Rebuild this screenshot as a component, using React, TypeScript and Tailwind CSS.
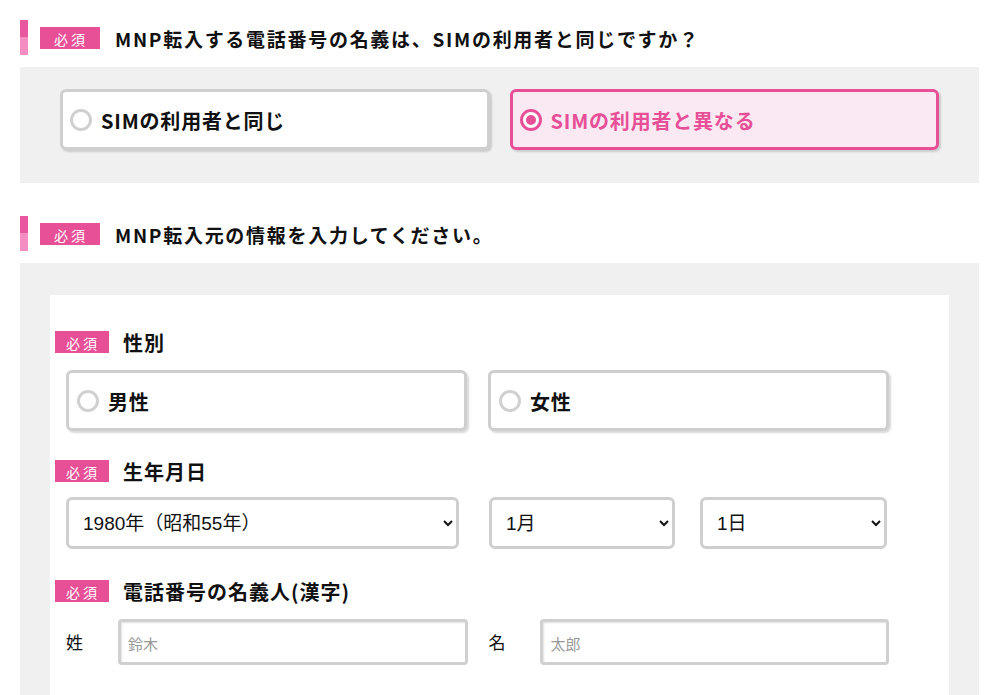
import { useState } from 'react'

const jp = "font-['Noto_Sans_CJK_JP',sans-serif]"

function Required({ wide = false }: { wide?: boolean }) {
  return (
    <span
      className={`block ${wide ? 'w-[60px]' : 'w-[54px]'} h-[22px] shrink-0 bg-[#e74f97] text-white text-[14px] leading-[22px] pt-[1px] text-center tracking-[3px] pl-[2px] ${jp}`}
    >
      必須
    </span>
  )
}

function SectionTitle({ children }: { children: React.ReactNode }) {
  return (
    <div className="flex items-center h-[35px]">
      <div className="flex flex-col w-[8px] h-[35px]">
        <div className="h-[17px] bg-[#e8589e]" />
        <div className="flex-1 bg-[#f48dc1]" />
      </div>
      <div className="ml-[12px]">
        <Required wide />
      </div>
      <h2 className={`ml-[15px] pt-[4px] text-[19px] font-bold text-[#111] tracking-[0.09em] ${jp}`}>{children}</h2>
    </div>
  )
}

function FieldTitle({ children }: { children: React.ReactNode }) {
  return (
    <div className="flex items-center h-[22px]">
      <Required />
      <span className={`ml-[14px] pt-[2px] text-[20px] font-bold text-[#111] tracking-[1px] ${jp}`}>{children}</span>
    </div>
  )
}

function RadioCard({
  label,
  checked,
  onClick,
  pad = 'pl-[8px]',
}: {
  label: string
  checked: boolean
  onClick: () => void
  pad?: string
}) {
  return (
    <button
      type="button"
      onClick={onClick}
      className={`flex items-center h-[61px] ${pad} rounded-[6px] border-[3px] shadow-[2px_2px_2px_rgba(0,0,0,0.15)] text-left ${
        checked ? 'border-[#e74f97] bg-[#fae9f3]' : 'border-[#cfcfcf] bg-white'
      }`}
    >
      <span
        className={`flex items-center justify-center w-[22px] h-[22px] rounded-full border-[3px] bg-white ${
          checked ? 'border-[#e74f97]' : 'border-[#d0d0d0]'
        }`}
      >
        {checked && <span className="w-[10px] h-[10px] rounded-full bg-[#e74f97]" />}
      </span>
      <span
        className={`ml-[9px] pt-[2px] text-[20px] font-bold tracking-[0.04em] ${
          checked ? 'text-[#e74f97]' : 'text-[#111]'
        } ${jp}`}
      >
        {label}
      </span>
    </button>
  )
}

const selectCls =
  "h-[52px] rounded-[6px] border-[3px] border-[#cfcfcf] bg-white pl-[10px] pr-[8px] text-[19px] text-[#111] font-['Liberation_Sans','Noto_Sans_CJK_JP',sans-serif]"

const inputCls =
  "h-[46px] rounded-[4px] border-[3px] border-[#d0d0d0] bg-white px-[7px] pt-[4px] text-[15px] text-[#111] placeholder:text-[#999] shadow-[inset_1px_1px_2px_rgba(0,0,0,0.12)] font-['Liberation_Sans','Noto_Sans_CJK_JP',sans-serif]"

export default function App() {
  const [same, setSame] = useState(false)
  const [gender, setGender] = useState<'m' | 'f' | null>(null)

  return (
    <div className="min-h-screen bg-white px-[20px] pt-[20px]">
      {/* 名義の確認 */}
      <SectionTitle>MNP転入する電話番号の名義は、SIMの利用者と同じですか？</SectionTitle>
      <div className="mt-[12px] bg-[#f0f0f0] px-[40px] pt-[22px] pb-[33px] grid grid-cols-2 gap-[20px]">
        <RadioCard label="SIMの利用者と同じ" checked={same} onClick={() => setSame(true)} pad="pl-[7px]" />
        <RadioCard label="SIMの利用者と異なる" checked={!same} onClick={() => setSame(false)} pad="pl-[7px]" />
      </div>

      {/* 転入元情報 */}
      <div className="mt-[33px]">
        <SectionTitle>MNP転入元の情報を入力してください。</SectionTitle>
      </div>
      <div className="mt-[12px] bg-[#f0f0f0] px-[30px] pt-[32px]">
        <div className="bg-white pl-[5px] pr-[60px] pt-[36px] pb-[40px]">
          <FieldTitle>性別</FieldTitle>
          <div className="mt-[17px] ml-[11px] grid grid-cols-2 gap-[21px]">
            <RadioCard label="男性" checked={gender === 'm'} onClick={() => setGender('m')} />
            <RadioCard label="女性" checked={gender === 'f'} onClick={() => setGender('f')} />
          </div>

          <div className="mt-[29px]">
            <FieldTitle>生年月日</FieldTitle>
          </div>
          <div className="mt-[15px] ml-[11px] flex">
            <select className={`${selectCls} w-[393px]`} defaultValue="1980">
              <option value="1980">1980年（昭和55年）</option>
              <option value="1981">1981年（昭和56年）</option>
            </select>
            <select className={`${selectCls} ml-[30px] w-[186px]`} defaultValue="1">
              <option value="1">1月</option>
              <option value="2">2月</option>
            </select>
            <select className={`${selectCls} ml-[25px] w-[187px]`} defaultValue="1">
              <option value="1">1日</option>
              <option value="2">2日</option>
            </select>
          </div>

          <div className="mt-[31px]">
            <FieldTitle>電話番号の名義人(漢字)</FieldTitle>
          </div>
          <div className={`mt-[17px] ml-[11px] flex items-center text-[17px] text-[#111] ${jp}`}>
            <span className="w-[52px]">姓</span>
            <input className={`${inputCls} w-[350px]`} placeholder="鈴木" />
            <span className="ml-[21px] w-[52px]">名</span>
            <input className={`${inputCls} w-[349px]`} placeholder="太郎" />
          </div>
        </div>
      </div>
    </div>
  )
}
